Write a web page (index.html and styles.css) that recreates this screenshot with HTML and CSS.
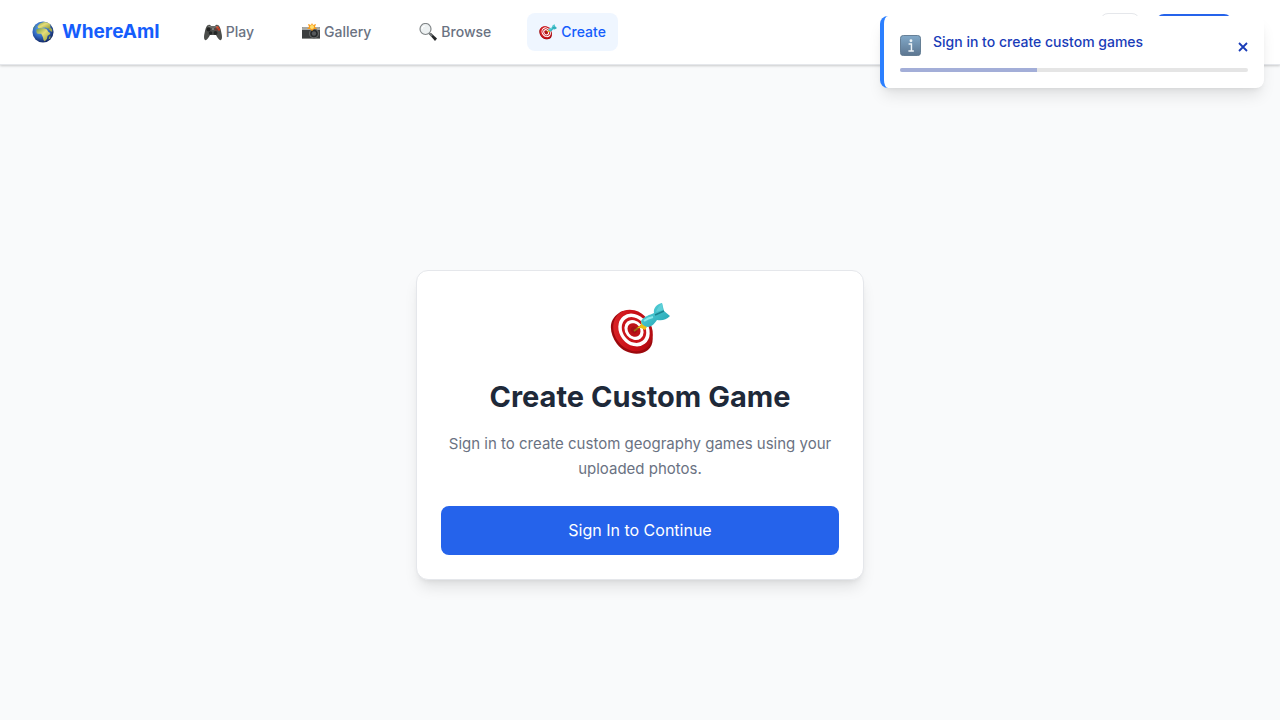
FILE: index.html
```html
<!DOCTYPE html>
<html lang="en">
<head>
<meta charset="utf-8">
<meta name="viewport" content="width=device-width, initial-scale=1">
<title>WhereAmI</title>
<link rel="stylesheet" href="styles.css">
</head>
<body>
<svg class="defs" aria-hidden="true">
  <defs>
    <linearGradient id="rim" x1="0" y1="0" x2="1" y2="1"><stop offset="0" stop-color="#e02a2c"/><stop offset=".5" stop-color="#c90f16"/><stop offset="1" stop-color="#a90b10"/></linearGradient>
    <linearGradient id="fin" x1="0" y1="0" x2="1" y2="1"><stop offset="0" stop-color="#63dbe2"/><stop offset="1" stop-color="#1b9fae"/></linearGradient>
    <radialGradient id="sea" cx=".4" cy=".35" r=".65"><stop offset="0" stop-color="#6fb4ee"/><stop offset=".6" stop-color="#2e64bd"/><stop offset="1" stop-color="#142a66"/></radialGradient>
    <linearGradient id="land" x1="0" y1="0" x2="1" y2="1"><stop offset="0" stop-color="#6f9c46"/><stop offset=".45" stop-color="#e6dd78"/><stop offset="1" stop-color="#8d9b3a"/></linearGradient>
    <linearGradient id="tile" x1="0" y1="0" x2="0" y2="1"><stop offset="0" stop-color="#82a9c9"/><stop offset="1" stop-color="#5c7690"/></linearGradient>
    <symbol id="dart" viewBox="0 0 60 52">
      <path d="M9 10C16 5 28 8 36 18C44 29 45 41 38 47C31 53 15 52 7 41C-1 30-2 17 9 10Z" fill="#9c090d"/>
      <ellipse cx="23" cy="27.500" rx="18.500" ry="22" transform="rotate(-36 23 27.500)" fill="url(#rim)"/>
      <g transform="rotate(-38 24 27)">
        <ellipse cx="24" cy="27" rx="14.500" ry="17.500" fill="#fff"/>
        <ellipse cx="24" cy="27" rx="11.200" ry="13.800" fill="#c9151b"/>
        <ellipse cx="24" cy="27" rx="8.800" ry="10.800" fill="#fff"/>
        <ellipse cx="24" cy="27" rx="6" ry="7.300" fill="#bd1218"/>
        <ellipse cx="24" cy="27" rx="3" ry="3.500" fill="#a51015"/>
      </g>
      <path d="M24 28L35 20" stroke="#9a7011" stroke-width="1.600"/>
      <path d="M27 25L31 22L31 18L37 24L35 27L31 25Z" fill="#ecc016"/>
      <path d="M31 18C34 13 40 12 44 10C43 5 47 1 52 0L54 8L60 13C56 17 52 18 47 17C44 21 42 24 37 24C34 23 31 21 31 18Z" fill="url(#fin)"/>
      <path d="M45 12L54 8" stroke="#1c8591" stroke-width="1.500"/>
      <path d="M46 9C47 5 50 2 52 0L53 7Z" fill="#5ed0d8"/>
      <path d="M34 18Q38 15 43 14" fill="none" stroke="#87e7ea" stroke-width="2"/>
    </symbol>
  </defs>
</svg>

<header class="header">
  <a class="brand" href="#">
    <svg class="globe" viewBox="0 0 24 24" aria-hidden="true">
      <circle cx="12" cy="12" r="11.500" fill="url(#sea)"/>
      <path d="M6 6Q8 2 13 1Q18 1 20 4L20 8Q18 9 15 7L12 7L10 8L7 8Z" fill="url(#land)"/>
      <path d="M5 9L9 8L13 8L16 9L18 12L20 13Q20 15 17 16Q17 20 14 22Q12 21 12 18Q11 15 10 14L6 14Q4 12 5 9Z" fill="url(#land)"/>
      <path d="M20 7L22 9L22 12L20 11L18 9ZM19 17L20 16L20 19L18 20Z" fill="#9da54c"/>
      <path d="M4 4Q2 6 1 9L3 7Z" fill="#4c8b70"/>
    </svg>
    <span>WhereAmI</span>
  </a>
  <nav class="nav" aria-label="Main">
    <a class="link" href="#">
      <svg class="icon" viewBox="0 0 18 18" aria-hidden="true">
        <path d="M4 2Q6 1 7 3H11Q12 1 14 2Q16 3 17 8Q19 16 17 17Q15 18 12 12H6Q3 18 1 17Q-1 16 1 8Q2 3 4 2Z" fill="#4c4e4b"/>
        <path d="M4 3L7 4H11L14 3" fill="none" stroke="#858783"/>
        <circle cx="4.500" cy="6.500" r="2" fill="#222"/><circle cx="11.500" cy="10" r="2" fill="#242626"/><circle cx="6.500" cy="10" r="1.800" fill="#242626"/>
        <circle cx="13.500" cy="4.500" r="1.300" fill="#de4b28"/><circle cx="15" cy="6.500" r="1.200" fill="#ce3d22"/><circle cx="12" cy="6.500" r="1" fill="#7b332b"/>
        <circle cx="9" cy="6" r="1" fill="#8b8d8a"/>
      </svg>
      <span>Play</span>
    </a>
    <a class="link" href="#">
      <svg class="icon" viewBox="0 0 18 18" aria-hidden="true">
        <rect y="4" width="18" height="12" rx="1" fill="#3c3e3f"/><path d="M0 5Q0 4 1 4H17Q18 4 18 5V7H0Z" fill="#a6a8a6"/><path d="M0 15H18V16H0Z" fill="#898b89"/>
        <circle cx="12" cy="10.500" r="5" fill="#656868"/><circle cx="12" cy="10.500" r="3.800" fill="#252829"/><circle cx="12" cy="10.500" r="2.200" fill="#56595c"/>
        <path d="M10 0L11 2L14 1L13 4L15 6L12 6L10 8L8 6L5 6L7 4L6 1L9 2Z" fill="#f99b19"/><circle cx="10" cy="4" r="2" fill="#ffe071"/>
      </svg>
      <span>Gallery</span>
    </a>
    <a class="link" href="#">
      <svg class="icon" viewBox="0 0 18 18" aria-hidden="true">
        <path d="M10 11L12 10L18 15.500L16 18Z" fill="#25282a"/><path d="M10 10L13 13" stroke="#777b7d" stroke-width="2"/>
        <circle cx="6.500" cy="6" r="5.500" fill="#edf1f2" stroke="#828789" stroke-width="1.200"/><path d="M3 6Q3 3 6 3" fill="none" stroke="#fff"/>
      </svg>
      <span>Browse</span>
    </a>
    <a class="link active" href="#" aria-current="page">
      <svg class="icon" viewBox="0 0 60 52" aria-hidden="true"><use href="#dart"/></svg>
      <span>Create</span>
    </a>
  </nav>
  <div class="actions">
    <button class="theme" type="button" aria-label="Change theme"></button>
    <button class="signin" type="button" aria-label="Account"></button>
  </div>
</header>

<main class="main">
  <section class="card">
    <svg class="target" viewBox="0 0 60 52" aria-hidden="true"><use href="#dart"/></svg>
    <h1 class="title">Create Custom Game</h1>
    <p class="lead">Sign in to create custom geography games using your uploaded photos.</p>
    <button class="primary" type="button">Sign In to Continue</button>
  </section>
</main>

<aside class="toast" role="status">
  <div class="toast-row">
    <svg class="info" viewBox="0 0 22 22" aria-hidden="true">
      <rect x=".5" y=".5" width="21" height="21" rx="3" fill="url(#tile)" stroke="#607a91"/>
      <circle cx="11.500" cy="6" r="1.500" fill="#eef4f8"/><path d="M9 9.500H12V16M8.800 16.800H14.500" fill="none" stroke="#eef4f8" stroke-width="1.500"/>
    </svg>
    <p class="message">Sign in to create custom games</p>
    <button class="close" type="button" aria-label="Dismiss">
      <svg class="cross" viewBox="0 0 10 10" aria-hidden="true"><path d="M1 1L9 9M9 1L1 9" stroke="currentColor" stroke-width="1.800"/></svg>
    </button>
  </div>
  <div class="track"><div class="bar" style="width:39.4%"></div></div>
</aside>
</body>
</html>
```
FILE: styles.css
```css
* { box-sizing: border-box; }

body {
  margin: 0;
  min-height: 100vh;
  display: flex;
  flex-direction: column;
  background: #f9fafb;
  color: #1e2939;
  font-family: Inter, "Liberation Sans", sans-serif;
}

button { border: 0; padding: 0; font: inherit; cursor: pointer; }
svg { display: block; flex: none; }
.defs { position: absolute; width: 0; height: 0; }

.header {
  display: flex;
  align-items: center;
  gap: 32px;
  height: 65px;
  padding: 0 48px 0 32px;
  background: #fff;
  border-bottom: 1px solid #e5e7eb;
  box-shadow: 0 1px 3px rgba(0, 0, 0, .1), 0 1px 2px rgba(0, 0, 0, .1);
}

.brand {
  display: flex;
  align-items: center;
  gap: 8px;
  color: #155dfc;
  font-size: 19px;
  font-weight: 700;
  line-height: 28px;
  text-decoration: none;
}
.globe { width: 22px; height: 22px; }

.nav { display: flex; gap: 24px; }
.link {
  display: flex;
  align-items: center;
  gap: 4px;
  padding: 9px 12px;
  border-radius: 8px;
  color: #6a7282;
  font-size: 14px;
  font-weight: 450;
  line-height: 20px;
  text-decoration: none;
}
.icon { width: 18px; height: 18px; }
.active { background: #eff6ff; color: #155dfc; }

.actions { display: flex; gap: 16px; margin-left: auto; }
.theme { width: 40px; height: 38px; border: 1px solid #e5e7eb; border-radius: 8px; background: #fff; }
.signin { width: 76px; height: 36px; border-radius: 8px; background: #2563eb; align-self: center; }

.main {
  flex: 1;
  display: flex;
  align-items: center;
  justify-content: center;
  padding: 65px 16px 0;
}
.card {
  display: flex;
  flex-direction: column;
  align-items: center;
  width: 100%;
  max-width: 448px;
  padding: 32px 24px 24px;
  background: #fff;
  border: 1px solid #e5e7eb;
  border-radius: 12px;
  box-shadow: 0 10px 15px -3px rgba(0, 0, 0, .1), 0 4px 6px -4px rgba(0, 0, 0, .1);
  text-align: center;
}
.target { width: 60px; height: 52px; }
.title { margin: 24px 0 16px; font-size: 29px; font-weight: 700; line-height: 36px; }
.lead { margin: 0 0 25px; color: #6a7282; font-size: 15px; line-height: 25px; }
.primary {
  width: 100%;
  padding: 12px 24px;
  border-radius: 8px;
  background: #2563eb;
  color: #fff;
  font-size: 16px;
  font-weight: 400;
  line-height: 25px;
}

.toast {
  position: absolute;
  top: 16px;
  right: 16px;
  width: 384px;
  padding: 16px;
  background: #fff;
  border-left: 4px solid #2b7fff;
  border-radius: 8px;
  box-shadow: 0 10px 15px -3px rgba(0, 0, 0, .1), 0 4px 6px -4px rgba(0, 0, 0, .1);
  color: #193cb8;
}
.toast-row { display: flex; align-items: flex-end; gap: 12px; height: 24px; margin-bottom: 12px; }
.info { width: 21px; height: 21px; }
.message { flex: 1; align-self: flex-start; margin: 0; font-size: 14px; font-weight: 450; line-height: 20px; }
.close { padding: 4px 0; background: none; color: #193cb8; }
.cross { width: 10px; height: 10px; }
.track { height: 4px; border-radius: 2px; background: #e5e5e5; overflow: hidden; }
.bar { height: 4px; background: #a3aed8; }
```
